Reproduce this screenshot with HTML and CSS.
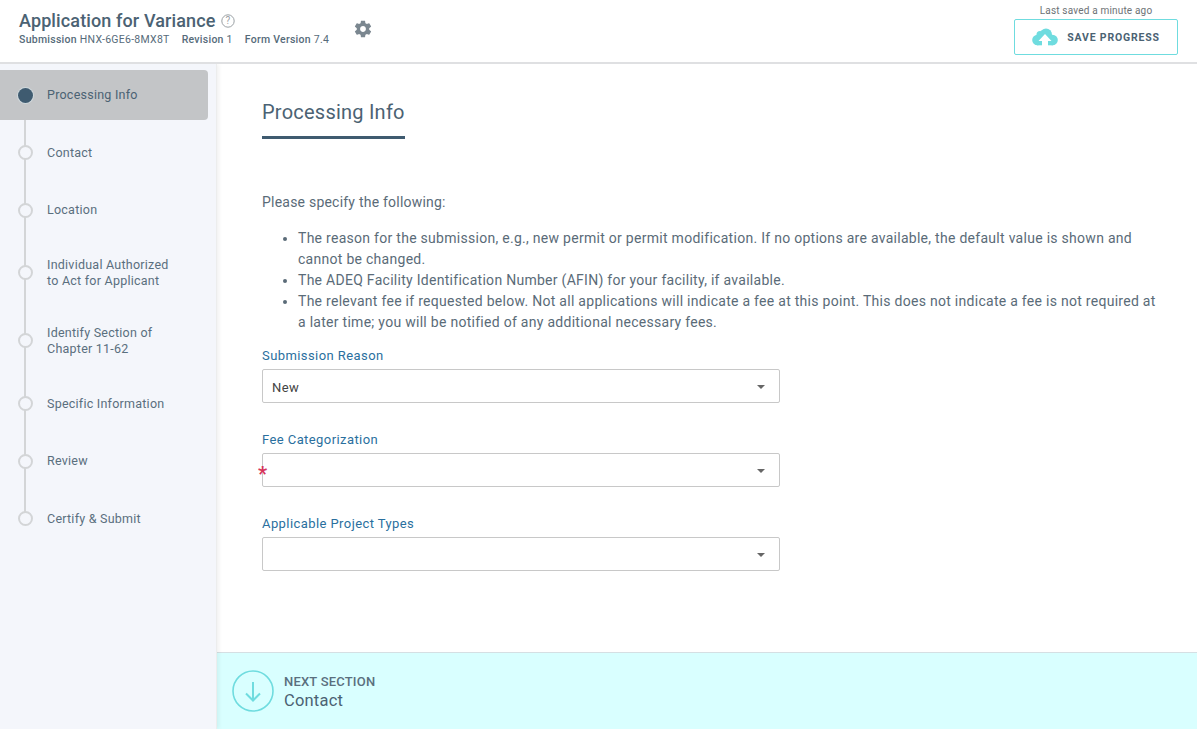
FILE: index.html
```html
<!DOCTYPE html>
<html lang="en">
<head>
<meta charset="utf-8">
<title>Application for Variance</title>
<link rel="stylesheet" href="styles.css">
</head>
<body>
<header class="topbar">
  <div class="heading">
    <h1 class="app-title">Application for Variance
      <svg class="help" viewBox="0 0 14 14" width="14" height="14"><circle cx="7" cy="7" r="6.2" fill="none" stroke="#9aa0a4" stroke-width="1"/><text x="7" y="10.2" text-anchor="middle" class="help-q">?</text></svg>
    </h1>
    <div class="meta"><span>Submission <span class="thin">HNX-6GE6-8MX8T</span></span><span>Revision <span class="thin">1</span></span><span>Form Version <span class="thin">7.4</span></span></div>
  </div>
  <svg class="gear" viewBox="0 0 24 24" width="20" height="20"><path fill="#7b8790" d="M19.43 12.98c.04-.32.07-.64.07-.98s-.03-.66-.07-.98l2.11-1.65c.19-.15.24-.42.12-.64l-2-3.46c-.12-.22-.39-.3-.61-.22l-2.49 1c-.52-.4-1.08-.73-1.69-.98l-.38-2.65C14.46 2.18 14.25 2 14 2h-4c-.25 0-.46.18-.49.42l-.38 2.65c-.61.25-1.17.59-1.69.98l-2.49-1c-.23-.09-.49 0-.61.22l-2 3.46c-.13.22-.07.49.12.64l2.11 1.65c-.04.32-.07.65-.07.98s.03.66.07.98l-2.11 1.65c-.19.15-.24.42-.12.64l2 3.46c.12.22.39.3.61.22l2.49-1c.52.4 1.08.73 1.69.98l.38 2.65c.03.24.24.42.49.42h4c.25 0 .46-.18.49-.42l.38-2.65c.61-.25 1.17-.59 1.69-.98l2.49 1c.23.09.49 0 .61-.22l2-3.46c.12-.22.07-.49-.12-.64l-2.11-1.65zM12 15.5c-1.93 0-3.5-1.57-3.5-3.5s1.57-3.5 3.5-3.5 3.5 1.57 3.5 3.5-1.57 3.5-3.5 3.5z"/></svg>
  <div class="save">
    <div class="saved-note">Last saved a minute ago</div>
    <button class="save-btn" type="button">
      <svg viewBox="0 0 26 18" width="26" height="18"><g fill="#6fdcdf"><circle cx="5.500" cy="12" r="5.300"/><circle cx="8" cy="6.500" r="3.500"/><circle cx="14" cy="6.500" r="6"/><circle cx="20.500" cy="12" r="5.300"/><rect x="5" y="9" width="16" height="8.300"/></g><path fill="#fff" d="M13 6l6.500 7H16v5h-6v-5H6.500z"/></svg>
      SAVE PROGRESS
    </button>
  </div>
</header>
<div class="body">
  <nav class="sidebar">
    <div class="steps">
      <div class="step active"><span class="dot"></span><span>Processing Info</span></div>
      <div class="step"><span class="dot"></span><span>Contact</span></div>
      <div class="step"><span class="dot"></span><span>Location</span></div>
      <div class="step tall"><span class="dot"></span><span>Individual Authorized<br>to Act for Applicant</span></div>
      <div class="step tall"><span class="dot"></span><span>Identify Section of<br>Chapter 11-62</span></div>
      <div class="step"><span class="dot"></span><span>Specific Information</span></div>
      <div class="step"><span class="dot"></span><span>Review</span></div>
      <div class="step last"><span class="dot"></span><span>Certify &amp; Submit</span></div>
    </div>
  </nav>
  <div class="content">
    <main class="form">
      <h2 class="section-title">Processing Info</h2>
      <p class="intro">Please specify the following:</p>
      <ul class="notes">
        <li>The reason for the submission, e.g., new permit or permit modification. If no options are available, the default value is shown and cannot be changed.</li>
        <li>The ADEQ Facility Identification Number (AFIN) for your facility, if available.</li>
        <li>The relevant fee if requested below. Not all applications will indicate a fee at this point. This does not indicate a fee is not required at a later time; you will be notified of any additional necessary fees.</li>
      </ul>
      <div class="field">
        <label class="label">Submission Reason</label>
        <div class="select">New<span class="caret"></span></div>
      </div>
      <div class="field">
        <label class="label">Fee Categorization</label>
        <div class="select"><span class="req">*</span><span class="caret"></span></div>
      </div>
      <div class="field">
        <label class="label">Applicable Project Types</label>
        <div class="select"><span class="caret"></span></div>
      </div>
    </main>
    <footer class="next">
      <svg viewBox="0 0 42 42" width="42" height="42"><circle cx="21" cy="21" r="20" fill="none" stroke="#6fdcdf" stroke-width="1.6"/><path d="M21 12v18M14 23.500l7 7 7-7" fill="none" stroke="#6fdcdf" stroke-width="2"/></svg>
      <div class="next-text">
        <div class="next-over">NEXT SECTION</div>
        <div class="next-name">Contact</div>
      </div>
    </footer>
  </div>
</div>
</body>
</html>
```
FILE: styles.css
```css
* { box-sizing: border-box; }
html, body { margin: 0; height: 100%; }
body {
  width: 1197px;
  height: 729px;
  overflow: hidden;
  font-family: Roboto, "Liberation Sans", sans-serif;
  color: #4b5f6e;
  background: #fff;
  display: flex;
  flex-direction: column;
}
.topbar {
  height: 64px;
  flex: none;
  border-bottom: 2px solid #dfe0e2;
  display: flex;
  align-items: flex-start;
  padding-left: 19px;
  padding-right: 19px;
  position: relative;
  z-index: 2;
  background: #fff;
}
.heading { padding-top: 10px; width: 334px; }
.app-title {
  margin: 0;
  font-size: 18px;
  line-height: 22px;
  font-weight: 500;
  color: #4b6273;
  letter-spacing: 0.12px;
}
.help { vertical-align: -1px; margin-left: 1px; }
.help-q { font-size: 10px; fill: #9aa0a4; font-weight: 400; }
.meta {
  display: flex;
  gap: 12px;
  font-size: 10.5px;
  line-height: 14px;
  font-weight: 500;
  color: #566b7a;
  margin-top: 1px;
  letter-spacing: 0.27px;
  white-space: nowrap;
}
.thin { font-weight: 400; }
.gear { margin-top: 19px; margin-left: 0; }
.save { margin-left: auto; width: 164px; text-align: center; padding-top: 4px; }
.saved-note { font-size: 10px; line-height: 13px; color: #6d7275; margin-bottom: 2px; letter-spacing: 0.18px; }
.save-btn {
  width: 164px;
  height: 36px;
  background: #fff;
  border: 1px solid #6fdcdf;
  border-radius: 2px;
  display: flex;
  align-items: center;
  justify-content: center;
  gap: 9px;
  font-family: inherit;
  font-size: 10.5px;
  font-weight: 700;
  letter-spacing: 0.8px;
  color: #4b6273;
  padding: 0;
}
.body { flex: 1; display: flex; min-height: 0; }
.sidebar {
  width: 217px;
  flex: none;
  background: #f4f6fb;
  border-right: 1px solid #eceded;
  box-shadow: 2px 0 4px rgba(0,0,0,.06);
  padding-top: 6px;
  position: relative;
  z-index: 1;
}
.steps { position: relative; width: 208px; }
.steps::before {
  content: "";
  position: absolute;
  left: 24px;
  top: 25px;
  bottom: 25px;
  width: 2px;
  background: #d3d5d7;
}
.step {
  height: 50px;
  margin-bottom: 7.5px;
  display: flex;
  align-items: center;
  font-size: 12.5px;
  line-height: 16px;
  color: #5a6f7e;
  position: relative;
  letter-spacing: 0.24px;
}
.step.tall { height: 60.5px; }
.step.active {
  background: #c3c5c7;
  border-radius: 0 4px 4px 0;
  color: #4b6273;
}
.dot {
  flex: none;
  width: 15px;
  height: 15px;
  margin-left: 18px;
  margin-right: 14px;
  border-radius: 50%;
  border: 2px solid #d3d5d7;
  background: #f4f6fb;
  position: relative;
}
.active .dot {
  background: #3f5b70;
  border: 0;
  box-shadow: 0 0 0 1px #cfd8dc;
}
.content { flex: 1; display: flex; flex-direction: column; min-width: 0; }
.form { flex: 1; padding: 36px 38px 0 45px; min-height: 0; }
.section-title {
  display: inline-block;
  margin: 0;
  font-size: 20px;
  line-height: 24px;
  font-weight: 400;
  color: #4b6273;
  letter-spacing: 0.23px;
  padding-bottom: 12px;
  border-bottom: 3px solid #3f5b70;
}
.intro {
  margin: 54px 0 0;
  font-size: 14px;
  line-height: 18px;
  color: #5a6b78;
  letter-spacing: 0.22px;
}
.notes {
  margin: 17px 0 0;
  padding-left: 36px;
  font-size: 14px;
  line-height: 21px;
  color: #5a6b78;
  letter-spacing: 0.28px;
}
.field { width: 518px; margin-top: 15px; }
.field + .field { margin-top: 29px; }
.label {
  display: block;
  font-size: 13px;
  line-height: 16px;
  color: #2a6f9e;
  letter-spacing: 0.42px;
  margin-bottom: 5px;
}
.select {
  height: 34px;
  border: 1px solid #c8c8c8;
  border-radius: 2px;
  display: flex;
  align-items: center;
  padding-left: 9px;
  padding-top: 2px;
  font-size: 13px;
  color: #444;
  position: relative;
  letter-spacing: 0.4px;
}
.caret {
  position: absolute;
  right: 14px;
  top: 15px;
  width: 0;
  height: 0;
  border-left: 4px solid transparent;
  border-right: 4px solid transparent;
  border-top: 4px solid #666;
}
.req {
  position: absolute;
  left: -5px;
  top: 10px;
  color: #d6345a;
  font-size: 20px;
  font-weight: 700;
  line-height: 20px;
}
.next {
  height: 77px;
  flex: none;
  background: #d9ffff;
  border-top: 1px solid #d5dfe3;
  display: flex;
  align-items: center;
  gap: 10px;
  padding-left: 15px;
}
.next-text { padding-top: 2px; }
.next-over {
  font-size: 13px;
  line-height: 17px;
  font-weight: 500;
  color: #5a6f7e;
  letter-spacing: 0.2px;
}
.next-name {
  font-size: 16.5px;
  line-height: 22px;
  color: #4b6273;
  letter-spacing: 0.2px;
}
```
